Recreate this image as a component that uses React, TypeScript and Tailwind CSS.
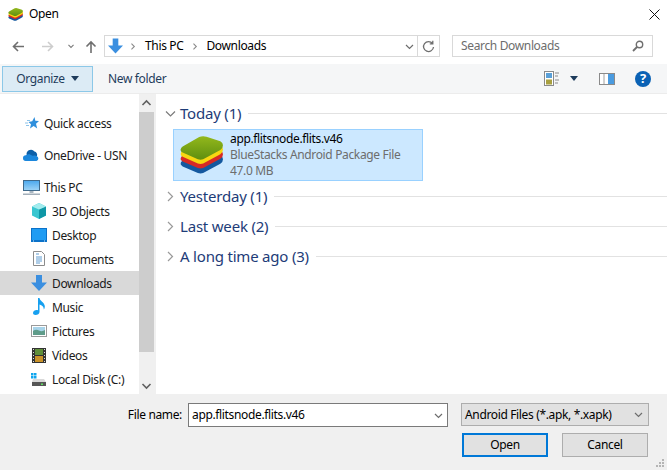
import React from "react";

const Chev = ({ d = "M2 4l3.500 3.500L9 4", c = "#6d6d6d", s = 11, w = 1.2 }: { d?: string; c?: string; s?: number; w?: number }) => (
  <svg width={s} height={s} viewBox="0 0 11 11" fill="none" stroke={c} strokeWidth={w}><path d={d} /></svg>
);

const LAYER = "M2 40Q0 46 8 50L54 70Q62 73 70 70L122 42Q130 37 130 28Q130 20 122 16L80 2Q68-1 58 3L8 32Q3 35 2 40Z";

const Stack = ({ w, h, id }: { w: number; h: number; id: string }) => (
  <svg width={w} height={h} viewBox="0 0 130 115">
    <defs>
      <linearGradient id={id} x1="0" y1="0" x2="0" y2="1">
        <stop offset="0" stopColor="#93b81c" />
        <stop offset="1" stopColor="#5f8f10" />
      </linearGradient>
    </defs>
    <path d={LAYER} fill="#14589f" transform="translate(0 42)" />
    <path d={LAYER} fill="#d62a26" transform="translate(0 27)" />
    <path d={LAYER} fill="#f7d711" transform="translate(0 13)" />
    <path d={LAYER} fill={`url(#${id})`} />
  </svg>
);

const Arrow = ({ w, h, c = "#3b8fe0" }: { w: number; h: number; c?: string }) => (
  <svg width={w} height={h} viewBox="0 0 16 16">
    <path d="M5 0h6v7.500h5L8 16 0 7.500h5z" fill={c} />
  </svg>
);

const icons: Record<string, React.ReactNode> = {
  quick: (
    <svg className="ml-[2px]" width="14" height="12" viewBox="0 0 14 12">
      <path d="M9.500 0l.8 3.800 3.700.2-3 2.700 1.200 4.800-3.600-2.600L5 11.500l1-4.300L3.500 5l3.700-.8z" fill="#2f8fdc" />
      <path d="M2 3.500h3M0 6h3M1 8.500h3" stroke="#8cc3ea" strokeWidth="1" />
    </svg>
  ),
  cloud: (
    <svg width="16" height="12" viewBox="0 0 16 12">
      <path d="M3.500 5a4.500 4.500 0 0 1 8-2.500A3.500 3.500 0 0 1 14 7H4z" fill="#0c5fa8" />
      <path d="M3 12A2.800 2.800 0 0 1 2.800 6.200L6 5l3.500 1.800 2.500-.3 1.500.5A2.600 2.600 0 0 1 13.500 12z" fill="#1b87dc" />
    </svg>
  ),
  pc: (
    <svg width="17" height="15" viewBox="0 0 17 15">
      <defs>
        <linearGradient id="scr" x1="0" y1="0" x2="0" y2="1">
          <stop offset="0" stopColor="#4aa8ee" />
          <stop offset="1" stopColor="#9ed4f7" />
        </linearGradient>
      </defs>
      <rect x="0.500" y="0.500" width="16" height="10" fill="url(#scr)" stroke="#3f6a8c" />
      <rect x="6.500" y="11" width="4" height="2" fill="#a9b6c1" />
      <rect x="0" y="13.500" width="17" height="1.500" fill="#a3afba" />
    </svg>
  ),
  cube: (
    <svg width="16" height="16" viewBox="0 0 16 16">
      <path d="M8 0l7 3.500v9L8 16l-7-3.500v-9z" fill="#39c6d0" />
      <path d="M8 6.500l7-3v9L8 16z" fill="#0f97a6" />
      <path d="M8 0l7 3.500-7 3-7-3z" fill="#a3ecee" />
    </svg>
  ),
  desk: (
    <svg width="16" height="14" viewBox="0 0 16 14">
      <rect width="16" height="14" fill="#0b72c9" />
      <rect x="1" y="1" width="14" height="11" fill="#1f9cf3" />
      <path d="M2 13h1M13 13h1" stroke="#d6ecfb" />
    </svg>
  ),
  docs: (
    <svg className="ml-[2px] mt-[-1px]" width="12" height="15" viewBox="0 0 12 15">
      <path d="M.5.500h8l3 3v11H.5z" fill="#fff" stroke="#8c8c8c" />
      <path d="M3 3h3M3 6h6M3 8h6M3 10h6M3 12h4" stroke="#5f9bd0" strokeWidth="1" />
    </svg>
  ),
  down: <Arrow w={16} h={16} />,
  music: (
    <svg className="ml-[2px] mt-[-1px]" width="12" height="17" viewBox="0 0 12 17">
      <path d="M5 0h1.500c.3 3 4.800 4 5.300 8 .2 1.500-.5 3-1 3.500.2-2.500-1.800-4.500-4.300-5V14c0 1.800-2 3-4 3C1 17 0 16.200 0 15c0-1.800 2-3 3.500-3 .5 0 1 .1 1.500.3z" fill="#16a0f0" />
    </svg>
  ),
  pics: (
    <svg width="16" height="12" viewBox="0 0 16 12">
      <rect x="0.500" y="0.500" width="15" height="11" fill="#fff" stroke="#9a9a9a" />
      <rect x="2" y="2" width="12" height="8" fill="#a8d4ea" />
      <path d="M2 6q3-2 6-.5T14 5v5H2z" fill="#5f9c8a" />
    </svg>
  ),
  video: (
    <svg className="ml-[1px]" width="14" height="15" viewBox="0 0 14 15">
      <rect width="14" height="15" fill="#333" />
      <rect x="3" y="1" width="8" height="6" fill="#5f8f3a" />
      <rect x="3" y="8" width="8" height="6" fill="#c9922a" />
      <path d="M1 1.500h1M1 4.500h1M1 7.500h1M1 10.500h1M1 13.500h1M12 1.500h1M12 4.500h1M12 7.500h1M12 10.500h1M12 13.500h1" stroke="#ddd" />
    </svg>
  ),
  disk: (
    <svg width="15" height="13" viewBox="0 0 15 13">
      <path d="M0 0h2.500v2.500H0zM3 0h2.500v2.500H3zM0 3h2.500v2.500H0zM3 3h2.500v2.500H3z" fill="#0ea5ee" />
      <path d="M2 6h11l2 3H1z" fill="#d9d9d9" />
      <rect x="1" y="9" width="14" height="4" fill="#565656" />
      <rect x="10" y="10.500" width="2" height="1.500" fill="#5fe05f" />
    </svg>
  ),
};

const NavRow = ({ icon, label, indent, selected, gap }: { icon: string; label: string; indent?: boolean; selected?: boolean; gap?: boolean }) => (
  <div className={`flex h-6 items-center ${gap ? "mt-2" : ""} ${selected ? "bg-[#d9d9d9]" : ""} ${indent ? "pl-[31px]" : "pl-[23px]"}`}>
    <div className="flex w-[21px] shrink-0 items-center justify-start">{icons[icon]}</div>
    <span className="whitespace-nowrap pt-px">{label}</span>
  </div>
);

const Group = ({ label, open, first }: { label: string; open?: boolean; first?: boolean }) => (
  <div className={`flex items-center pl-[9px] ${first ? "mb-[2px] h-[28px]" : "h-[30px]"}`}>
    <div className="flex w-[15px] shrink-0 items-center">
      {open ? <Chev d="M1 3.500l4.500 4.500L10 3.500" c="#7b7b7b" /> : <Chev d="M3 1l4.500 4.500L3 10" c="#9a9a9a" />}
    </div>
    <span className="whitespace-nowrap text-[15px] tracking-[-0.2px] text-[#1e3c78]">{label}</span>
    <div className="ml-[7px] h-px grow bg-[#e2e2e2]" />
  </div>
);

export default function App() {
  return (
    <div
      className="relative flex h-[470px] w-[667px] flex-col overflow-hidden bg-white text-[12px] text-[#1a1a1a]"
      style={{ fontFamily: '"Noto Sans", sans-serif', letterSpacing: "-0.35px" }}
    >
      {/* title bar */}
      <div className="flex h-[28px] shrink-0 items-center pl-2 pr-[7px]">
        <Stack w={15} h={13} id="g1" />
        <span className="ml-[6px] text-black">Open</span>
        <div className="ml-auto">
          <svg width="11" height="11" viewBox="0 0 11 11" stroke="#111" strokeWidth="1"><path d="M.5.500l10 10M10.500.500l-10 10" /></svg>
        </div>
      </div>

      {/* address row */}
      <div className="mt-[7px] flex h-[22px] shrink-0 items-center pl-[12px] pr-[14px]">
        <svg width="12" height="11" viewBox="0 0 12 11" fill="none" stroke="#6f6f6f" strokeWidth="1.600"><path d="M12 5.500H1.500M6 1L1.500 5.500 6 10" /></svg>
        <svg className="ml-[18px]" width="12" height="11" viewBox="0 0 12 11" fill="none" stroke="#cdcdcd" strokeWidth="1.600"><path d="M0 5.500h10.500M6 1l4.500 4.500L6 10" /></svg>
        <div className="ml-[13px]"><Chev c="#7b7b7b" s={8} w={1.500} /></div>
        <svg className="ml-[10px]" width="12" height="13" viewBox="0 0 12 13" fill="none" stroke="#6f6f6f" strokeWidth="1.600"><path d="M6 13V2M1.500 6.500L6 2l4.500 4.500" /></svg>
        <div className="ml-[7px] flex h-[22px] w-[336px] items-center border border-[#d9d9d9]">
          <div className="ml-[3px]"><Arrow w={15} h={16} /></div>
          <div className="ml-[6px]"><Chev d="M3 2l3.500 3.500L3 9" c="#8a8a8a" s={9} w={1.300} /></div>
          <span className="ml-[7px] text-black">This PC</span>
          <div className="ml-[8px]"><Chev d="M3 2l3.500 3.500L3 9" c="#8a8a8a" s={9} w={1.300} /></div>
          <span className="ml-[6px] text-black">Downloads</span>
          <div className="ml-auto flex h-full items-center">
            <Chev c="#6d6d6d" />
            <div className="ml-[2px] flex h-full w-[22px] items-center justify-center border-l border-[#d9d9d9]">
              <svg width="13" height="13" viewBox="0 0 13 13" fill="none" stroke="#6f6f6f" strokeWidth="1.300"><path d="M10.500 3.500A5 5 0 1 0 11.500 7M10.800 .8v3h-3" /></svg>
            </div>
          </div>
        </div>
        <div className="ml-auto flex h-[22px] w-[201px] items-center justify-between border border-[#d9d9d9] pl-2 pr-2 text-[#6d6d6d]">
          <span>Search Downloads</span>
          <svg width="12" height="12" viewBox="0 0 12 12" fill="none" stroke="#6f6f6f"><circle cx="7.500" cy="4.500" r="3.200" strokeWidth="1.400" /><path d="M5 7l-4 4" strokeWidth="1.800" /></svg>
        </div>
      </div>

      {/* toolbar */}
      <div className="mt-[7px] flex h-[30px] shrink-0 items-center border-b border-[#ececec] bg-[#f5f6f7] pl-[2px] pr-[16px] text-[#1e3c5c]">
        <div className="flex h-[26px] w-[91px] items-center justify-center gap-[6px] border border-[#8cc8e8] bg-[#dcebf5]">
          <span>Organize</span>
          <svg width="8" height="5" viewBox="0 0 8 5"><path d="M0 0h8L4 5z" fill="#1e3c5c" /></svg>
        </div>
        <span className="ml-[15px]">New folder</span>
        <div className="ml-auto flex items-center">
          <svg width="15" height="15" viewBox="0 0 15 15">
            <rect x="0.500" y="0.500" width="9" height="14" fill="#fff" stroke="#8a8a8a" />
            <rect x="2" y="2" width="6" height="5" fill="#5aa0d8" />
            <rect x="2" y="8.500" width="6" height="5" fill="#a8a040" />
            <path d="M11 2h4M11 5h3M11 9h4M11 12h3" stroke="#8a8a8a" />
          </svg>
          <svg className="ml-[11px]" width="8" height="5" viewBox="0 0 8 5"><path d="M0 0h8L4 5z" fill="#1e3c5c" /></svg>
          <svg className="ml-[21px]" width="16" height="12" viewBox="0 0 16 12">
            <rect x="0.500" y="0.500" width="15" height="11" fill="#fff" stroke="#8a8a8a" />
            <rect x="9" y="1" width="6" height="10" fill="#4a9be0" />
            <path d="M5 1v10" stroke="#a0a0a0" />
          </svg>
          <div className="ml-[20px] flex h-4 w-4 items-center justify-center rounded-full bg-[#0b62b5] text-[13px] font-bold text-white">?</div>
        </div>
      </div>

      {/* main */}
      <div className="flex min-h-0 grow">
        <div className="w-[139px] shrink-0 pt-[17px]">
          <NavRow icon="quick" label="Quick access" />
          <NavRow icon="cloud" label="OneDrive - USN" gap />
          <NavRow icon="pc" label="This PC" gap />
          <NavRow icon="cube" label="3D Objects" indent />
          <NavRow icon="desk" label="Desktop" indent />
          <NavRow icon="docs" label="Documents" indent />
          <NavRow icon="down" label="Downloads" indent selected />
          <NavRow icon="music" label="Music" indent />
          <NavRow icon="pics" label="Pictures" indent />
          <NavRow icon="video" label="Videos" indent />
          <NavRow icon="disk" label="Local Disk (C:)" indent />
        </div>
        <div className="flex w-[15px] shrink-0 flex-col bg-[#f0f0f0]">
          <div className="flex h-[18px] shrink-0 items-center justify-center">
            <Chev d="M1.500 7L5.500 3l4 4" c="#606060" s={11} w={1.600} />
          </div>
          <div className="h-[240px] bg-[#cdcdcd]" />
          <div className="mt-auto flex h-[18px] shrink-0 items-center justify-center">
            <Chev d="M1.500 4l4 4 4-4" c="#606060" s={11} w={1.600} />
          </div>
        </div>
        <div className="w-[2px] shrink-0 bg-[#f0f0f0]" />
        <div className="min-w-0 grow pt-[5px]">
          <Group label="Today (1)" open first />
          <div className="ml-[17px] flex h-[52px] w-[250px] items-center border border-[#99d1ff] bg-[#cce8ff] pl-[6px]">
            <Stack w={43} h={38} id="g2" />
            <div className="ml-[7px] flex flex-col leading-[16px] text-[#6d6d6d]">
              <span className="text-black">app.flitsnode.flits.v46</span>
              <span>BlueStacks Android Package File</span>
              <span>47.0 MB</span>
            </div>
          </div>
          <Group label="Yesterday (1)" />
          <Group label="Last week (2)" />
          <Group label="A long time ago (3)" />
        </div>
      </div>

      {/* footer */}
      <div className="flex h-[76px] shrink-0 justify-end bg-[#f0f0f0] pr-[18px] pt-[9px] text-black">
        <div className="flex h-[24px] items-center">
          <span>File name:</span>
          <div className="ml-[6px] flex h-[24px] w-[260px] items-center justify-between border border-[#7a7a7a] bg-white pl-[3px] pr-[3px]">
            <span>app.flitsnode.flits.v46</span>
            <Chev c="#6d6d6d" />
          </div>
        </div>
        <div className="ml-[13px] flex w-[188px] flex-col">
          <div className="flex h-[23px] items-center justify-between border border-[#adadad] bg-[#e1e1e1] pl-[3px] pr-[4px]">
            <span>Android Files (*.apk, *.xapk)</span>
            <Chev c="#6d6d6d" />
          </div>
          <div className="mt-[7px] flex justify-between px-px">
            <div className="flex h-[24px] w-[86px] items-center justify-center border-2 border-[#0078d7] bg-[#e1e1e1]">Open</div>
            <div className="flex h-[24px] w-[86px] items-center justify-center border border-[#adadad] bg-[#e1e1e1]">Cancel</div>
          </div>
        </div>
      </div>

      {/* resize grip */}
      <svg className="absolute bottom-[2px] right-[2px]" width="10" height="10" viewBox="0 0 10 10" fill="#b5b5b5">
        <path d="M7 1h2v2H7zM4 4h2v2H4zM7 4h2v2H7zM1 7h2v2H1zM4 7h2v2H4zM7 7h2v2H7z" />
      </svg>
    </div>
  );
}
